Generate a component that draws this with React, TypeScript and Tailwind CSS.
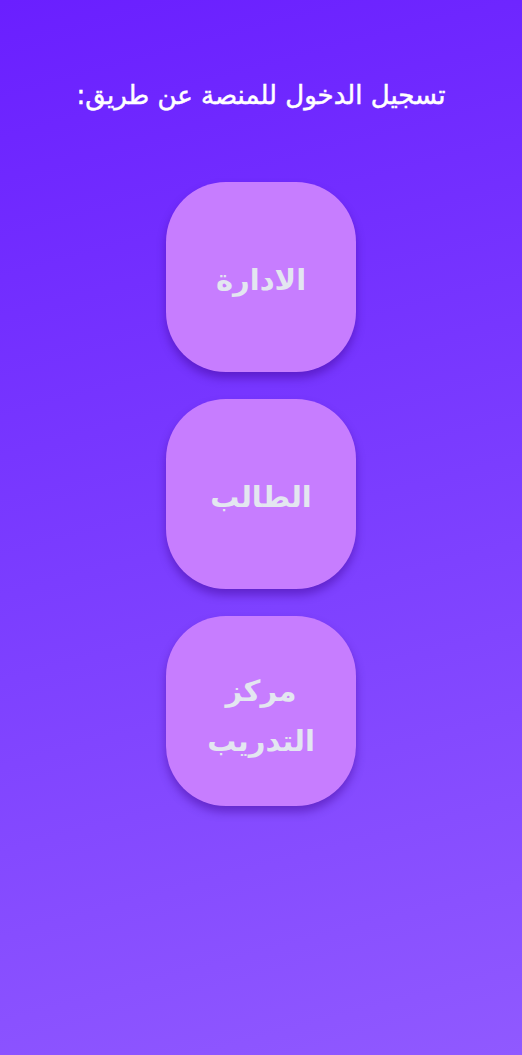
export default function App() {
  const btn =
    "w-[190px] h-[190px] rounded-[60px] bg-[#c77dff] flex items-center justify-center text-center text-[29px] font-bold leading-[50px] text-[#e3e6f0] shadow-[0_6px_10px_rgba(60,0,140,0.45)]";
  return (
    <div
      dir="rtl"
      className="w-[522px] h-[1055px] flex flex-col items-center bg-[linear-gradient(165deg,#6a1fff_0%,#7b3dff_50%,#9059ff_100%)]"
      style={{ fontFamily: '"DejaVu Sans", "Noto Sans", sans-serif' }}
    >
      <h1 className="mt-[76px] text-[26px] font-normal text-white leading-[38px] [-webkit-text-stroke:0.5px_white]">
        تسجيل الدخول للمنصة عن طريق:
      </h1>
      <div className="mt-[68px] flex flex-col items-center gap-[27px]">
        <button className={btn}>
          <span className="mt-[6px]">الادارة</span>
        </button>
        <button className={btn}>
          <span className="mt-[6px]">الطالب</span>
        </button>
        <button className={btn}>
          <span className="mt-[10px]">
            مركز
            <br />
            التدريب
          </span>
        </button>
      </div>
    </div>
  );
}
